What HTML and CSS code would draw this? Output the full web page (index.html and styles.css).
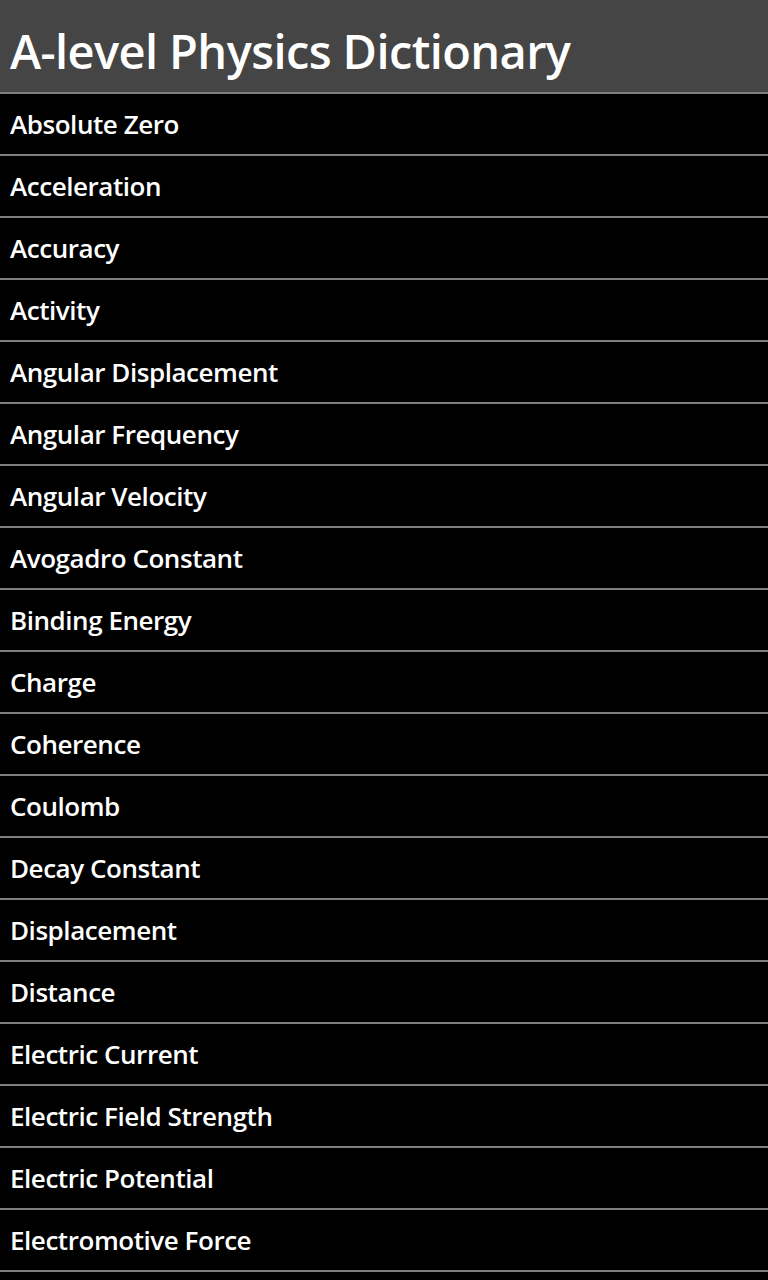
FILE: index.html
```html
<!DOCTYPE html>
<html>
<head>
<meta charset="utf-8">
<link rel="stylesheet" href="styles.css">
</head>
<body>
<div class="app">
  <header class="header"><h1 class="title">A-level Physics Dictionary</h1></header>
  <ul class="list">
    <li class="item">Absolute Zero</li>
    <li class="item">Acceleration</li>
    <li class="item">Accuracy</li>
    <li class="item">Activity</li>
    <li class="item">Angular Displacement</li>
    <li class="item">Angular Frequency</li>
    <li class="item">Angular Velocity</li>
    <li class="item">Avogadro Constant</li>
    <li class="item">Binding Energy</li>
    <li class="item">Charge</li>
    <li class="item">Coherence</li>
    <li class="item">Coulomb</li>
    <li class="item">Decay Constant</li>
    <li class="item">Displacement</li>
    <li class="item">Distance</li>
    <li class="item">Electric Current</li>
    <li class="item">Electric Field Strength</li>
    <li class="item">Electric Potential</li>
    <li class="item">Electromotive Force</li>
  </ul>
</div>
</body>
</html>
```
FILE: styles.css
```css
html, body {
  margin: 0;
  padding: 0;
  background: #000;
  height: 100%;
  overflow: hidden;
}
.app {
  width: 768px;
  height: 1280px;
  overflow: hidden;
  font-family: "Open Sans", "Noto Sans", sans-serif;
  color: #fff;
}
.header {
  height: 92px;
  background: #454545;
  border-bottom: 2px solid #808080;
  box-sizing: content-box;
  display: flex;
  align-items: center;
  padding: 0 10px;
}
.title {
  margin: 0;
  font-size: 47px;
  font-weight: 600;
  letter-spacing: -0.6px;
  line-height: 1;
  padding-top: 10px;
}
.list {
  list-style: none;
  margin: 0;
  padding: 0;
}
.item {
  height: 60px;
  border-bottom: 2px solid #808080;
  display: flex;
  align-items: center;
  padding: 0 10px;
  font-size: 26px;
  font-weight: 600;
  letter-spacing: -0.45px;
}
```
